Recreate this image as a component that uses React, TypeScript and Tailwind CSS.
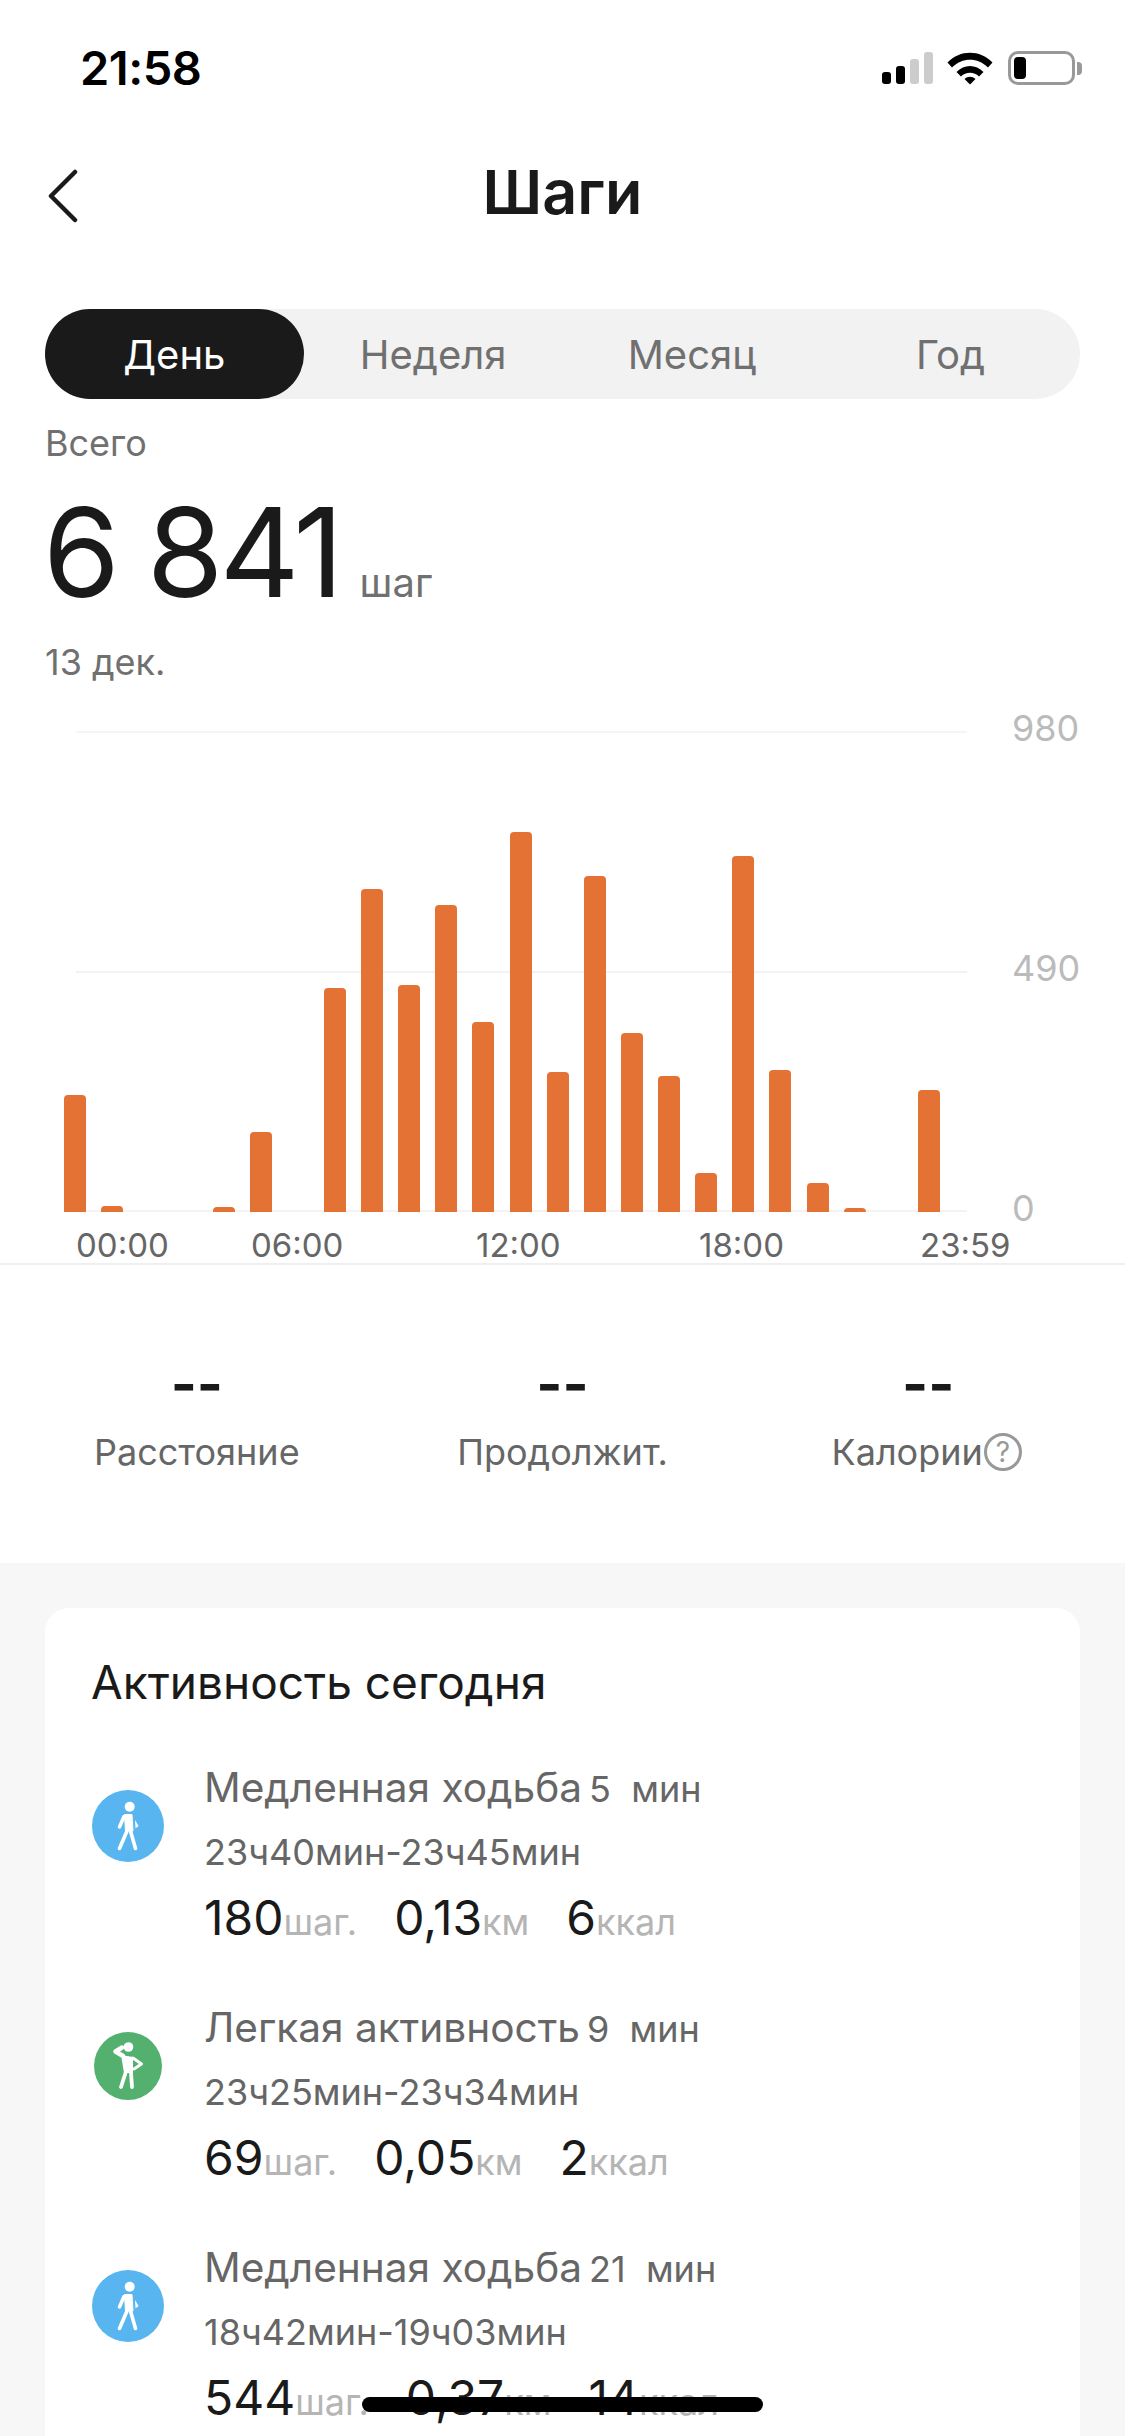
const bars = [
  0.244, 0.012, 0, 0, 0.011, 0.168, 0, 0.468, 0.675, 0.473, 0.64, 0.397, 0.793, 0.292, 0.701, 0.374, 0.283, 0.081,
  0.743, 0.297, 0.06, 0.008, 0, 0.254,
];

const tabs = ["День", "Неделя", "Месяц", "Год"];

const activities = [
  {
    kind: "walk",
    title: "Медленная ходьба",
    minutes: "5",
    time: "23ч40мин-23ч45мин",
    steps: "180",
    km: "0,13",
    kcal: "6",
  },
  {
    kind: "light",
    title: "Легкая активность",
    minutes: "9",
    time: "23ч25мин-23ч34мин",
    steps: "69",
    km: "0,05",
    kcal: "2",
  },
  {
    kind: "walk",
    title: "Медленная ходьба",
    minutes: "21",
    time: "18ч42мин-19ч03мин",
    steps: "544",
    km: "0,37",
    kcal: "14",
  },
];

function StatusIcons() {
  return (
    <div className="flex items-center">
      <div className="flex items-end gap-[5px] h-[32px]">
        <div className="w-[9px] h-[12px] rounded-[3px] bg-black" />
        <div className="w-[9px] h-[18px] rounded-[3px] bg-black" />
        <div className="w-[9px] h-[25px] rounded-[3px] bg-[#cccccc]" />
        <div className="w-[9px] h-[32px] rounded-[3px] bg-[#cccccc]" />
      </div>
      <svg width="46" height="34" viewBox="0 0 46 34" className="ml-[14px]">
        <path d="M0.5 11.5C13 -1.5 33 -1.5 45.5 11.5L41 16.5C31 6 15 6 5 16.5Z" fill="black" />
        <path d="M9.5 21C17 13 29 13 36.5 21L32 25.5C27 20.5 19 20.5 14 25.5Z" fill="black" />
        <path d="M17.5 28C21 25 25 25 28.5 28L23 33.5Z" fill="black" />
      </svg>
      <div className="ml-[15px] w-[67px] h-[34px] rounded-[10px] border-[3px] border-[#999999] p-[3px]">
        <div className="w-[12px] h-full rounded-[4px] bg-black" />
      </div>
      <div className="ml-[2px] w-[5px] h-[13px] rounded-r-[4px] bg-[#999999]" />
    </div>
  );
}

function WalkIcon() {
  return (
    <svg width="72" height="72" viewBox="0 0 72 72">
      <circle cx="36" cy="36" r="36" fill="#58b5f0" />
      <circle cx="37.7" cy="16.7" r="5" fill="white" />
      <path d="M32.5 24.5L40 24.5L41 41L33.5 41Z" fill="white" stroke="white" strokeWidth="1" strokeLinejoin="round" />
      <path d="M32 26.5L27.5 37" stroke="white" strokeWidth="3.5" strokeLinecap="round" fill="none" />
      <path d="M35 41L27.5 58.5" stroke="white" strokeWidth="3.6" strokeLinecap="round" fill="none" />
      <path d="M38.5 41L43.5 58.5" stroke="white" strokeWidth="3.6" strokeLinecap="round" fill="none" />
      <path d="M43 30L46.5 36L43.5 38.5Z" fill="white" />
    </svg>
  );
}

function LightIcon() {
  return (
    <svg width="68" height="68" viewBox="0 0 68 68">
      <circle cx="34" cy="34" r="34" fill="#53b06f" />
      <circle cx="34.5" cy="15" r="4.8" fill="white" />
      <path
        d="M28 15.5L21.5 19.5L29 24"
        stroke="white"
        strokeWidth="4.5"
        strokeLinecap="round"
        strokeLinejoin="round"
        fill="none"
      />
      <path d="M27 23L39 25L39 41L30 41Z" fill="white" />
      <path d="M31.5 41L27 55" stroke="white" strokeWidth="3.8" strokeLinecap="round" fill="none" />
      <path d="M37 41L38 55" stroke="white" strokeWidth="3.8" strokeLinecap="round" fill="none" />
      <path
        d="M39 26L47.5 32L40 37"
        stroke="white"
        strokeWidth="3"
        strokeLinecap="round"
        strokeLinejoin="round"
        fill="none"
      />
    </svg>
  );
}

function Activity({ item }: { item: (typeof activities)[number] }) {
  return (
    <div className="flex items-start h-[240px]">
      <div className="w-[112px] h-[72px] mt-[59px] flex items-center justify-center pr-[40px] shrink-0">
        {item.kind === "walk" ? <WalkIcon /> : <LightIcon />}
      </div>
      <div className="pt-[37px]">
        <div className="flex items-baseline h-[61px] text-[#666666]">
          <span className="text-[40.6px] leading-none">{item.title}</span>
          <span className="ml-[7px] text-[36px] leading-none whitespace-pre">{item.minutes}  мин</span>
        </div>
        <div className="h-[61px] -mt-[7px] text-[36px] leading-[61px] text-[#666666]">{item.time}</div>
        <div className="flex items-baseline gap-[37px] mt-[11px]">
          <div className="flex items-baseline">
            <span className="text-[48px] leading-none text-[#1a1a1a]">{item.steps}</span>
            <span className="text-[36px] leading-none text-[#b5b5b5]">шаг.</span>
          </div>
          <div className="flex items-baseline">
            <span className="text-[48px] leading-none text-[#1a1a1a]">{item.km}</span>
            <span className="text-[36px] leading-none text-[#b5b5b5]">км</span>
          </div>
          <div className="flex items-baseline">
            <span className="text-[48px] leading-none text-[#1a1a1a]">{item.kcal}</span>
            <span className="text-[36px] leading-none text-[#b5b5b5]">ккал</span>
          </div>
        </div>
      </div>
    </div>
  );
}

export default function App() {
  return (
    <div className="relative w-[1125px] h-[2436px] overflow-hidden bg-[#f7f7f7] font-['Inter','Noto_Sans',sans-serif]">
      <div className="bg-white h-[1563px]">
        {/* Status bar */}
        <div className="flex items-center justify-between h-[136px] pl-[80px] pr-[43px]">
          <span className="text-[47px] font-semibold text-black tracking-[-0.5px]">21:58</span>
          <StatusIcons />
        </div>

        {/* Header */}
        <div className="relative flex items-center justify-center h-[116px]">
          <svg width="34" height="54" viewBox="0 0 34 54" className="absolute left-[46px] top-[33px]">
            <path d="M29 3L5 27L29 51" stroke="#1a1a1a" strokeWidth="4.5" strokeLinecap="round" strokeLinejoin="round" fill="none" />
          </svg>
          <h1 className="text-[61px] font-semibold text-[#1a1a1a] -mt-[2px]">Шаги</h1>
        </div>

        {/* Tabs */}
        <div className="mt-[57px] mx-[45px] grid grid-cols-4 h-[90px] rounded-[45px] bg-[#f2f2f2]">
          {tabs.map((tab, i) => (
            <div
              key={tab}
              className={`flex items-center justify-center pt-[2px] rounded-[45px] text-[40px] ${
                i === 0 ? "bg-[#1a1a1a] text-white" : "text-[#707070]"
              }`}
            >
              {tab}
            </div>
          ))}
        </div>

        {/* Total */}
        <div className="pl-[45px]">
          <div className="mt-[24px] h-[40px] text-[36px] leading-[40px] text-[#707070]">Всего</div>
          <div className="flex items-baseline mt-[27px] -ml-[2px] h-[124px]">
            <span className="text-[124px] leading-[124px] text-[#1a1a1a] tracking-[-4px]">6 841</span>
            <span className="ml-[20px] text-[40px] leading-none text-[#707070]">шаг</span>
          </div>
          <div className="mt-[28px] h-[40px] text-[36px] leading-[40px] text-[#707070]">13 дек.</div>
        </div>

        {/* Chart */}
        <div className="mt-[49px] pl-[64px] flex">
          <div className="relative w-[903px] h-[481px]">
            <div className="absolute left-[12px] right-0 top-0 border-t-2 border-[#f5f5f5]" />
            <div className="absolute left-[12px] right-0 top-[240px] border-t-2 border-[#f3f3f3]" />
            <div className="absolute left-[12px] right-0 bottom-0 border-t-2 border-[#f3f3f3]" />
            <div className="absolute left-0 top-0 h-[481px] flex items-end">
              {bars.map((value, i) => (
                <div key={i} className="w-[37.13px] shrink-0">
                  {value > 0 && (
                    <div
                      className="w-[22px] rounded-t-[4px] bg-[#e57235]"
                      style={{ height: `${value * 479}px` }}
                    />
                  )}
                </div>
              ))}
            </div>
          </div>
          <div className="ml-[45px] h-[496px] flex flex-col justify-between -mt-[11px] text-[36px] leading-[16px] text-[#bbbbbb]">
            <span>980</span>
            <span>490</span>
            <span>0</span>
          </div>
        </div>

        {/* Time axis */}
        <div className="relative -mt-[4px] h-[51px] text-[33px] text-[#666666]">
          <span className="absolute left-[76px] top-[13px] leading-[40px]">00:00</span>
          <span className="absolute left-[251px] top-[13px] leading-[40px]">06:00</span>
          <span className="absolute left-[476px] top-[13px] leading-[40px]">12:00</span>
          <span className="absolute left-[699px] top-[13px] leading-[40px]">18:00</span>
          <span className="absolute left-[920px] top-[13px] leading-[40px]">23:59</span>
        </div>
        <div className="border-t-2 border-[#efefef]" />

        {/* Summary */}
        <div className="grid grid-cols-3 px-[14px] pt-[84px]">
          {["Расстояние", "Продолжит.", "Калории"].map((label, i) => (
            <div key={label} className="flex flex-col items-center">
              <div className="h-[70px] text-[56px] leading-[70px] font-bold text-[#1a1a1a]">--</div>
              <div className={`flex items-center h-[66px] text-[36px] text-[#666666] ${i === 2 ? "mr-[3px]" : ""}`}>
                {label}
                {i === 2 && (
                  <span className="ml-[1px] flex items-center justify-center w-[38px] h-[38px] rounded-full border-[3px] border-[#999999] text-[28px] leading-none text-[#999999]">
                    ?
                  </span>
                )}
              </div>
            </div>
          ))}
        </div>
      </div>

      {/* Today card */}
      <div className="mt-[45px] mx-[45px] rounded-t-[24px] bg-white pl-[47px] pt-[49px]">
        <div className="h-[50px] -ml-[1px] text-[46px] leading-[50px] text-[#1a1a1a]">Активность сегодня</div>
        <div className="mt-[24px]">
          {activities.map((item, i) => (
            <Activity key={i} item={item} />
          ))}
        </div>
      </div>

      {/* Home indicator */}
      <div className="absolute left-[362px] top-[2397px] w-[401px] h-[15px] rounded-full bg-black" />
    </div>
  );
}
